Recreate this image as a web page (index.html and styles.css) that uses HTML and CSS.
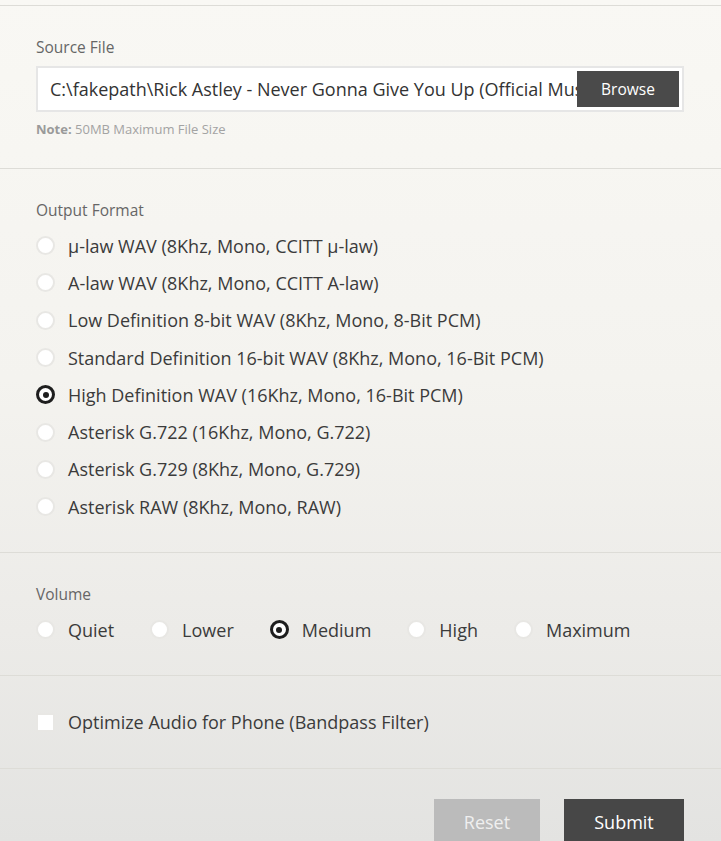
FILE: index.html
```html
<!DOCTYPE html>
<html>
<head>
<meta charset="utf-8">
<link rel="stylesheet" href="styles.css">
</head>
<body>
<div class="page">
  <div class="top-rest"></div>

  <section class="section source">
    <div class="label">Source File</div>
    <div class="file-field">
      <span class="file-name">C:\fakepath\Rick Astley - Never Gonna Give You Up (Official Music Video).mp3</span>
      <span class="browse">Browse</span>
    </div>
    <div class="note"><b>Note:</b> 50MB Maximum File Size</div>
  </section>

  <section class="section format">
    <div class="label">Output Format</div>
    <div class="options">
      <div class="option"><span class="radio"></span><span>μ-law WAV (8Khz, Mono, CCITT μ-law)</span></div>
      <div class="option"><span class="radio"></span><span>A-law WAV (8Khz, Mono, CCITT A-law)</span></div>
      <div class="option"><span class="radio"></span><span>Low Definition 8-bit WAV (8Khz, Mono, 8-Bit PCM)</span></div>
      <div class="option"><span class="radio"></span><span>Standard Definition 16-bit WAV (8Khz, Mono, 16-Bit PCM)</span></div>
      <div class="option"><span class="radio checked"></span><span>High Definition WAV (16Khz, Mono, 16-Bit PCM)</span></div>
      <div class="option"><span class="radio"></span><span>Asterisk G.722 (16Khz, Mono, G.722)</span></div>
      <div class="option"><span class="radio"></span><span>Asterisk G.729 (8Khz, Mono, G.729)</span></div>
      <div class="option"><span class="radio"></span><span>Asterisk RAW (8Khz, Mono, RAW)</span></div>
    </div>
  </section>

  <section class="section volume">
    <div class="label">Volume</div>
    <div class="inline-options">
      <div class="option"><span class="radio"></span><span>Quiet</span></div>
      <div class="option"><span class="radio"></span><span>Lower</span></div>
      <div class="option"><span class="radio checked"></span><span>Medium</span></div>
      <div class="option"><span class="radio"></span><span>High</span></div>
      <div class="option"><span class="radio"></span><span>Maximum</span></div>
    </div>
  </section>

  <section class="section phone">
    <div class="option"><span class="checkbox"></span><span>Optimize Audio for Phone (Bandpass Filter)</span></div>
  </section>

  <div class="actions">
    <button class="btn reset">Reset</button>
    <button class="btn submit">Submit</button>
  </div>
</div>
</body>
</html>
```

FILE: styles.css
```css
html, body {
  margin: 0;
  padding: 0;
  height: 100%;
}

body {
  font-family: "Open Sans", "Noto Sans", sans-serif;
  background: linear-gradient(to bottom, #f9f8f4 0%, #f4f3ef 45%, #ecebe8 75%, #e3e3e1 100%);
  color: #3b3b3b;
  overflow: hidden;
}

.page {
  width: 721px;
}

.top-rest {
  height: 5px;
  border-bottom: 1px solid #dddcd7;
}

.section {
  padding: 31px 36px 30px 36px;
  border-bottom: 1px solid #dddcd7;
}

.label {
  font-size: 15.5px;
  line-height: 21px;
  color: #666;
}

.file-field {
  display: flex;
  align-items: center;
  margin-top: 8px;
  width: 644px;
  height: 42px;
  background: #fff;
  border: 2px solid #e6e6e6;
  overflow: hidden;
}

.file-name {
  flex: 1;
  min-width: 0;
  overflow: hidden;
  padding-left: 12px;
  font-size: 18px;
  line-height: 42px;
  white-space: nowrap;
  color: #333;
}

.browse {
  flex-shrink: 0;
  margin-right: 3px;
  width: 102px;
  height: 36px;
  background: #4a4a4a;
  color: #fff;
  font-size: 15.5px;
  line-height: 36px;
  text-align: center;
}

.note {
  margin-top: 8.5px;
  font-size: 13px;
  line-height: 17px;
  color: #a3a3a3;
}

.source {
  padding-bottom: 30.5px;
}

.note b {
  color: #9a9a9a;
}

.format {
  padding-bottom: 27px;
}

.options {
  margin-top: 6px;
}

.option {
  display: flex;
  align-items: center;
  height: 37.3px;
  font-size: 18px;
  color: #3b3b3b;
}

.radio {
  box-sizing: border-box;
  width: 19px;
  height: 19px;
  border-radius: 50%;
  background: #fff;
  border: 2px solid #e8e7e4;
  margin-right: 13px;
  flex-shrink: 0;
  display: flex;
  align-items: center;
  justify-content: center;
}

.radio.checked {
  border: 3px solid #1e1e1e;
}

.radio.checked::after {
  content: "";
  width: 6px;
  height: 6px;
  border-radius: 50%;
  background: #1e1e1e;
}

.volume {
  padding-top: 30.5px;
  padding-bottom: 27px;
}

.inline-options {
  margin-top: 6.3px;
  display: flex;
  gap: 36px;
}

.phone {
  padding-top: 27.3px;
  padding-bottom: 27.3px;
}

.checkbox {
  box-sizing: border-box;
  width: 19px;
  height: 19px;
  background: #fff;
  border: 2px solid #e8e7e4;
  margin-right: 13px;
  flex-shrink: 0;
}

.actions {
  display: flex;
  justify-content: flex-end;
  gap: 24px;
  padding: 30px 37px 0 0;
}

.btn {
  border: none;
  height: 46px;
  font-family: "Open Sans", "Noto Sans", sans-serif;
  font-size: 18px;
  color: #fff;
  padding: 0;
}

.reset {
  width: 106px;
  background: #bbbbbb;
  color: #efefef;
}

.submit {
  width: 120px;
  background: #474747;
}
```
